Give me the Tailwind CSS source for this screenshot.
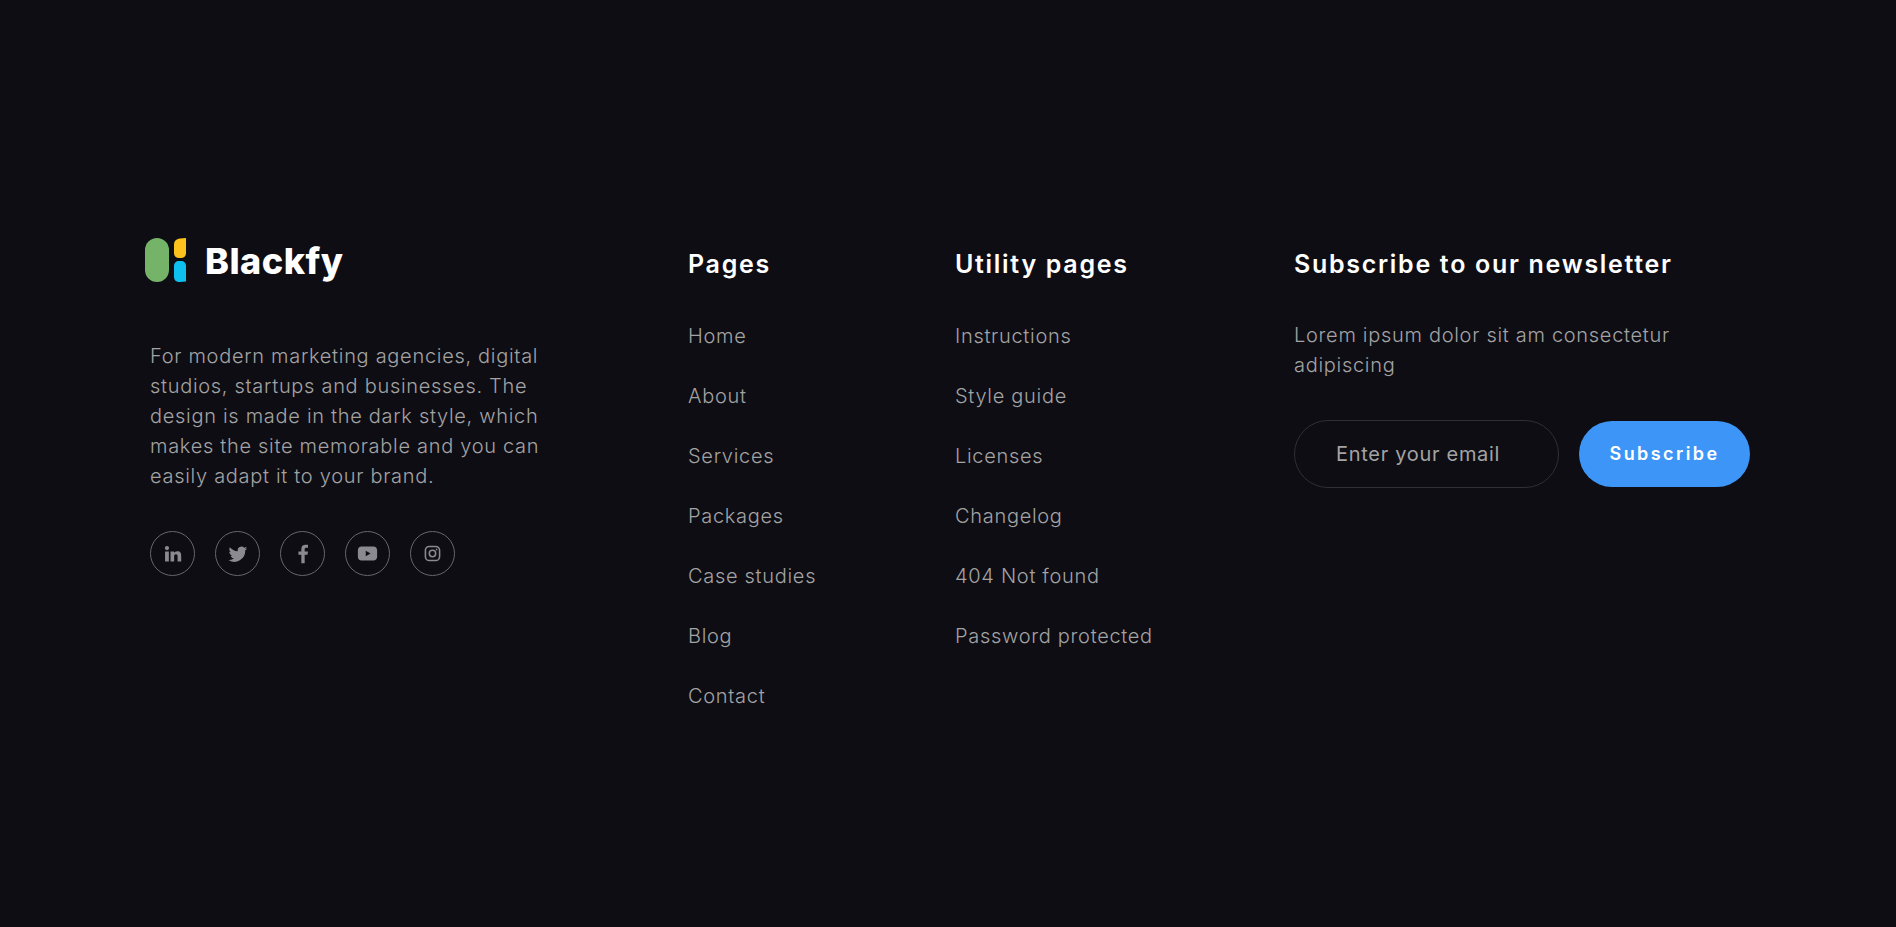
<!DOCTYPE html>
<html lang="en">
  <head>
    <meta charset="UTF-8" />
    <meta name="viewport" content="width=device-width, initial-scale=1.0" />
    <title>Blackfy Footer</title>
    <script src="https://cdn.jsdelivr.net/npm/@tailwindcss/browser@4"></script>
  </head>
  <body class="bg-[#0e0d14] h-screen overflow-hidden font-['Inter',sans-serif] font-light text-[20px] tracking-[0.7px] leading-[30px] text-[#a3a3a3]">
    <footer class="flex pt-[238px] pl-[145px]">
      <!-- Brand -->
      <div class="w-[543px]">
        <div class="flex items-center h-[44px]">
          <svg width="41" height="44" viewBox="0 0 41 44">
            <rect x="0" y="0" width="24" height="44" rx="12" fill="#75b468" />
            <path d="M29 7c0-4 2-6 6-6.500L41 0v15c0 3-2 5-5 5h-2c-3 0-5-2-5-5z" fill="#fdc31c" />
            <path d="M29 28c0-3 2-5 5-5h2c3 0 5 2 5 5v15.500l-6 .5c-4 0-6-2-6-5z" fill="#0dc0ee" />
          </svg>
          <span class="ml-[19px] mt-[1px] font-extrabold text-[36px] leading-none text-white tracking-[0.5px]">Blackfy</span>
        </div>
        <p class="mt-[59px] ml-[5px] w-[410px]">For modern marketing agencies, digital studios, startups and businesses. The design is made in the dark style, which makes the site memorable and you can easily adapt it to your brand.</p>
        <div class="flex gap-[20px] mt-[40px] ml-[5px] text-[#8a8a90]">
          <a class="w-[45px] h-[45px] rounded-full border border-[#66666c] flex items-center justify-center">
            <svg width="19" height="19" viewBox="0 0 24 24" fill="currentColor"><path d="M5 2.500a2.700 2.700 0 1 1 0 5.400 2.700 2.700 0 0 1 0-5.400zM2.600 9.500h4.800V22H2.600zM9.500 9.500h4.400v1.800c.7-1.200 2.200-2.100 4.200-2.100 4 0 4.900 2.600 4.900 6V22h-4.600v-6c0-1.600-.2-3.200-2.100-3.200-2 0-2.200 1.500-2.200 3.100V22H9.500z" /></svg>
          </a>
          <a class="w-[45px] h-[45px] rounded-full border border-[#66666c] flex items-center justify-center">
            <svg width="20" height="20" viewBox="0 0 24 24" fill="currentColor"><path d="M23 5.100c-.8.400-1.700.600-2.600.700.900-.600 1.700-1.400 2-2.500-.900.500-1.900.900-2.900 1.100A4.600 4.600 0 0 0 11.700 8.600C7.900 8.400 4.500 6.600 2.200 3.800c-1.200 2.100-.6 4.800 1.400 6.100-.7 0-1.400-.2-2.100-.6 0 2.200 1.600 4.200 3.700 4.600-.7.200-1.400.2-2.100.1.600 1.900 2.300 3.200 4.300 3.200A9.300 9.300 0 0 1 .6 19.200 13 13 0 0 0 20.700 7.600c.9-.6 1.700-1.500 2.300-2.500z" /></svg>
          </a>
          <a class="w-[45px] h-[45px] rounded-full border border-[#66666c] flex items-center justify-center">
            <svg width="20" height="20" viewBox="0 0 24 24" fill="currentColor"><path d="M14 23v-10h3.400l.6-4H14V6.500c0-1.200.4-2 2-2h2V1.100C17.600 1 16.400 1 15 1c-3 0-5 1.800-5 5.100V9H6.500v4H10v10z" /></svg>
          </a>
          <a class="w-[45px] h-[45px] rounded-full border border-[#66666c] flex items-center justify-center">
            <svg width="21" height="21" viewBox="0 0 24 24" fill="currentColor"><path fill-rule="evenodd" d="M5 4h14c2.200 0 4 1.800 4 4v8c0 2.200-1.800 4-4 4H5c-2.200 0-4-1.800-4-4V8c0-2.200 1.800-4 4-4zm5 4.800v6.400l5.500-3.200z" /></svg>
          </a>
          <a class="w-[45px] h-[45px] rounded-full border border-[#66666c] flex items-center justify-center">
            <svg width="17" height="17" viewBox="0 0 24 24" fill="none" stroke="currentColor" stroke-width="2.200"><rect x="2" y="2" width="20" height="20" rx="5.500" /><circle cx="12" cy="12" r="4.500" /><circle cx="17.800" cy="6.200" r="1.200" fill="currentColor" stroke="none" /></svg>
          </a>
        </div>
      </div>

      <!-- Pages -->
      <div class="w-[267px]">
        <h3 class="text-[25px] leading-[36px] mt-[8px] font-semibold tracking-[1.7px] text-white">Pages</h3>
        <ul class="flex flex-col gap-[30px] mt-[39px]">
          <li>Home</li>
          <li>About</li>
          <li>Services</li>
          <li>Packages</li>
          <li>Case studies</li>
          <li>Blog</li>
          <li>Contact</li>
        </ul>
      </div>

      <!-- Utility pages -->
      <div class="w-[339px]">
        <h3 class="text-[25px] leading-[36px] mt-[8px] font-semibold tracking-[1.7px] text-white">Utility pages</h3>
        <ul class="flex flex-col gap-[30px] mt-[39px]">
          <li>Instructions</li>
          <li>Style guide</li>
          <li>Licenses</li>
          <li>Changelog</li>
          <li>404 Not found</li>
          <li>Password protected</li>
        </ul>
      </div>

      <!-- Newsletter -->
      <div class="w-[460px]">
        <h3 class="text-[25px] leading-[36px] mt-[8px] font-semibold tracking-[1.7px] text-white">Subscribe to our newsletter</h3>
        <p class="mt-[38px] w-[400px]">Lorem ipsum dolor sit am consectetur adipiscing</p>
        <form class="flex items-center gap-[20px] mt-[40px]">
          <input class="w-[265px] h-[68px] rounded-full border border-[#2f2f35] bg-transparent pl-[41px] font-normal text-[#a3a3a3] placeholder:text-[#a3a3a3] outline-none" placeholder="Enter your email" />
          <button class="w-[171px] h-[66px] rounded-full bg-[#3d96f7] text-white font-semibold text-[18px] leading-[30px] tracking-[2.4px]">Subscribe</button>
        </form>
      </div>
    </footer>
  </body>
</html>
